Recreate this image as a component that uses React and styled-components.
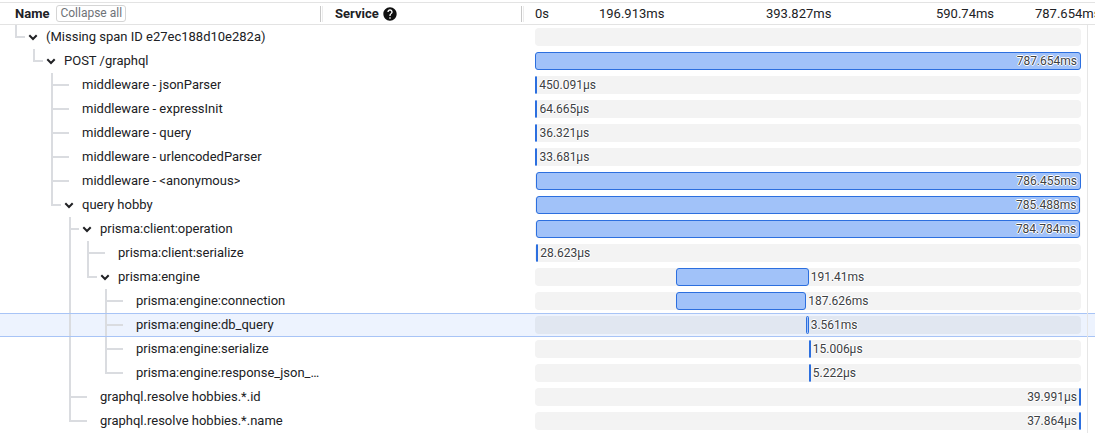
import React from 'react';
import styled, { createGlobalStyle, css } from 'styled-components';
import { MdHelp } from 'react-icons/md';

const TOTAL = 787.654;
const LINE = '#dadce0';

const GlobalStyle = createGlobalStyle`
  body {
    margin: 0;
    background: #fff;
    font-family: Roboto, "Liberation Sans", Arial, sans-serif;
    color: #202124;
    overflow: hidden;
  }
`;

const Page = styled.div`
  width: 1095px;
  padding-top: 2px;
`;

const HeaderRow = styled.div`
  display: flex;
  height: 21px;
  border-top: 1px solid #e3e3e3;
  border-bottom: 1px solid #e3e3e3;
  font-size: 13px;
`;

const HeadCell = styled.div`
  display: flex;
  align-items: center;
  width: ${(p) => p.width}px;
  padding-left: ${(p) => p.pad}px;
  box-sizing: border-box;
  gap: 6px;
`;

const HeadTitle = styled.span`
  font-weight: 700;
  color: #202124;
`;

const CollapseButton = styled.button`
  font-family: inherit;
  font-size: 12px;
  color: #6f7378;
  background: #fff;
  border: 1px solid #d5d5d5;
  border-radius: 3px;
  height: 17px;
  padding: 0 3px;
  line-height: 15px;
  margin-left: 1px;
`;

const Divider = styled.div`
  margin-left: auto;
  width: 1px;
  height: 16px;
  border-left: 1px solid #c8c8c8;
  border-right: 1px solid #ececec;
`;

const HelpIcon = styled(MdHelp)`
  margin-left: -3px;
  color: #111;
`;

const Ticks = styled.div`
  flex: 1;
  display: grid;
  grid-template-columns: 64px 167px 170px 99px 1fr;
  padding-left: 11px;
  align-items: center;
  overflow: hidden;
  white-space: nowrap;
  font-size: 13px;
`;

const Row = styled.div`
  display: flex;
  height: 24px;
  box-sizing: border-box;
  ${(p) =>
    p.selected &&
    css`
      background: #edf3fe;
      border-top: 1px solid #a8c4f6;
      border-bottom: 1px solid #a8c4f6;
    `}
`;

const NameCell = styled.div`
  display: flex;
  align-items: stretch;
  width: 323px;
  flex: none;
  padding-left: 15px;
  padding-right: 2px;
  box-sizing: border-box;
  font-size: 13px;
  overflow: hidden;
`;

const Guide = styled.div`
  flex: none;
  width: 18px;
  box-sizing: border-box;
  ${(p) => p.line && `border-left: 2px solid ${LINE};`}
  ${(p) => p.selected && 'margin: -1px 0;'}
`;

const Elbow = styled.div`
  flex: none;
  position: relative;
  width: ${(p) => (p.leaf ? 18 : 10)}px;

  &::before {
    content: '';
    position: absolute;
    left: 0;
    top: ${(p) => (p.selected ? -1 : 0)}px;
    width: 2px;
    height: ${(p) => (p.last ? 'calc(50% + 1px)' : 'calc(100% + 2px)')};
    background: ${LINE};
  }

  &::after {
    content: '';
    position: absolute;
    left: 0;
    top: calc(50% - 1px);
    width: 100%;
    height: 2px;
    background: ${LINE};
  }
`;

const Chevron = styled.svg`
  flex: none;
  align-self: center;
  width: 16px;
  height: 16px;
  margin-right: 5px;
  fill: none;
  stroke: #202124;
  stroke-width: 2;
`;

const LeafSpacer = styled.div`
  flex: none;
  width: 13px;
`;

const SpanName = styled.span`
  align-self: center;
  white-space: nowrap;
  overflow: hidden;
  text-overflow: ellipsis;
  min-width: 0;
  margin-top: -1px;
`;

const ServiceCell = styled.div`
  width: 201px;
  flex: none;
`;

const TimeCell = styled.div`
  flex: 1;
  display: flex;
  align-items: center;
  padding-left: 11px;
  padding-right: 6px;
`;

const Gutter = styled.div`
  flex: none;
  width: 7px;
  border-left: 1px solid #e6e6e6;
  ${(p) => p.selected && 'margin: -1px 0;'}
`;

const Track = styled.div`
  position: relative;
  flex: 1;
  height: 18px;
  border-radius: 4px;
  background: ${(p) => (p.selected ? '#e1e7f1' : '#f3f3f3')};
`;

const Bar = styled.div`
  position: absolute;
  top: 0;
  bottom: 0;
  min-width: 2px;
  box-sizing: border-box;
  background: #a1c2f9;
  border: 1px solid #2c6fdf;
  border-radius: 3px;
`;

const placeStyles = {
  after: css`
    left: calc(100% + 3px);
  `,
  inside: css`
    right: 3px;
  `,
  before: css`
    right: calc(100% + 3px);
  `,
};

const Duration = styled.span`
  position: absolute;
  top: 50%;
  transform: translateY(-50%);
  font-size: 12px;
  color: #3c4043;
  white-space: nowrap;
  text-shadow: 1px 0 #fff, -1px 0 #fff, 0 1px #fff, 0 -1px #fff;
  ${(p) => placeStyles[p.place]}
`;

const tree = {
  name: '(Missing span ID e27ec188d10e282a)',
  children: [
    {
      name: 'POST /graphql',
      bar: [0, 787.654, '787.654ms', 'inside'],
      children: [
        { name: 'middleware - jsonParser', bar: [0.4, 0.45, '450.091µs', 'after'] },
        { name: 'middleware - expressInit', bar: [0.6, 0.065, '64.665µs', 'after'] },
        { name: 'middleware - query', bar: [0.6, 0.036, '36.321µs', 'after'] },
        { name: 'middleware - urlencodedParser', bar: [0.7, 0.034, '33.681µs', 'after'] },
        { name: 'middleware - <anonymous>', bar: [1.1, 786.455, '786.455ms', 'inside'] },
        {
          name: 'query hobby',
          bar: [1.4, 785.488, '785.488ms', 'inside'],
          children: [
            {
              name: 'prisma:client:operation',
              bar: [1.8, 784.784, '784.784ms', 'inside'],
              children: [
                { name: 'prisma:client:serialize', bar: [1.9, 0.029, '28.623µs', 'after'] },
                {
                  name: 'prisma:engine',
                  bar: [203.4, 191.41, '191.41ms', 'after'],
                  children: [
                    { name: 'prisma:engine:connection', bar: [203.6, 187.626, '187.626ms', 'after'] },
                    { name: 'prisma:engine:db_query', bar: [391.3, 3.561, '3.561ms', 'after'], selected: true },
                    { name: 'prisma:engine:serialize', bar: [394.9, 0.015, '15.006µs', 'after'] },
                    { name: 'prisma:engine:response_json_serialization', bar: [395.0, 0.005, '5.222µs', 'after'] },
                  ],
                },
              ],
            },
            { name: 'graphql.resolve hobbies.*.id', bar: [784.8, 0.04, '39.991µs', 'before'] },
            { name: 'graphql.resolve hobbies.*.name', bar: [784.8, 0.038, '37.864µs', 'before'] },
          ],
        },
      ],
    },
  ],
};

function flatten(node, level, last, guides, out) {
  out.push({ ...node, level, last, guides });
  const kids = node.children || [];
  kids.forEach((child, i) => flatten(child, level + 1, i === kids.length - 1, [...guides, !last], out));
  return out;
}

const rows = flatten(tree, 0, true, [], []);

const ExpandIcon = () => (
  <Chevron viewBox="0 0 16 16">
    <path d="M4.3 6.3 L8 10 L11.7 6.3" />
  </Chevron>
);

const SpanRow = ({ span }) => {
  const leaf = !span.children;
  return (
    <Row selected={span.selected}>
      <NameCell>
        {span.guides.map((g, i) => (
          <Guide key={i} line={g} selected={span.selected} />
        ))}
        <Elbow leaf={leaf} last={span.last} selected={span.selected} />
        {leaf ? <LeafSpacer /> : <ExpandIcon />}
        <SpanName>{span.name}</SpanName>
      </NameCell>
      <ServiceCell />
      <TimeCell>
        <Track selected={span.selected}>
          {span.bar && (
            <Bar
              style={{
                left: `${(span.bar[0] / TOTAL) * 100}%`,
                width: `${(span.bar[1] / TOTAL) * 100}%`,
              }}
            >
              <Duration place={span.bar[3]}>{span.bar[2]}</Duration>
            </Bar>
          )}
        </Track>
      </TimeCell>
      <Gutter selected={span.selected} />
    </Row>
  );
};

const App = () => (
  <Page>
    <GlobalStyle />
    <HeaderRow>
      <HeadCell width={323} pad={15}>
        <HeadTitle>Name</HeadTitle>
        <CollapseButton>Collapse all</CollapseButton>
        <Divider />
      </HeadCell>
      <HeadCell width={201} pad={12}>
        <HeadTitle>Service</HeadTitle>
        <HelpIcon size={16} />
        <Divider />
      </HeadCell>
      <Ticks>
        <span>0s</span>
        <span>196.913ms</span>
        <span>393.827ms</span>
        <span>590.74ms</span>
        <span>787.654ms</span>
      </Ticks>
    </HeaderRow>
    {rows.map((span, i) => (
      <SpanRow key={i} span={span} />
    ))}
  </Page>
);

export default App;
